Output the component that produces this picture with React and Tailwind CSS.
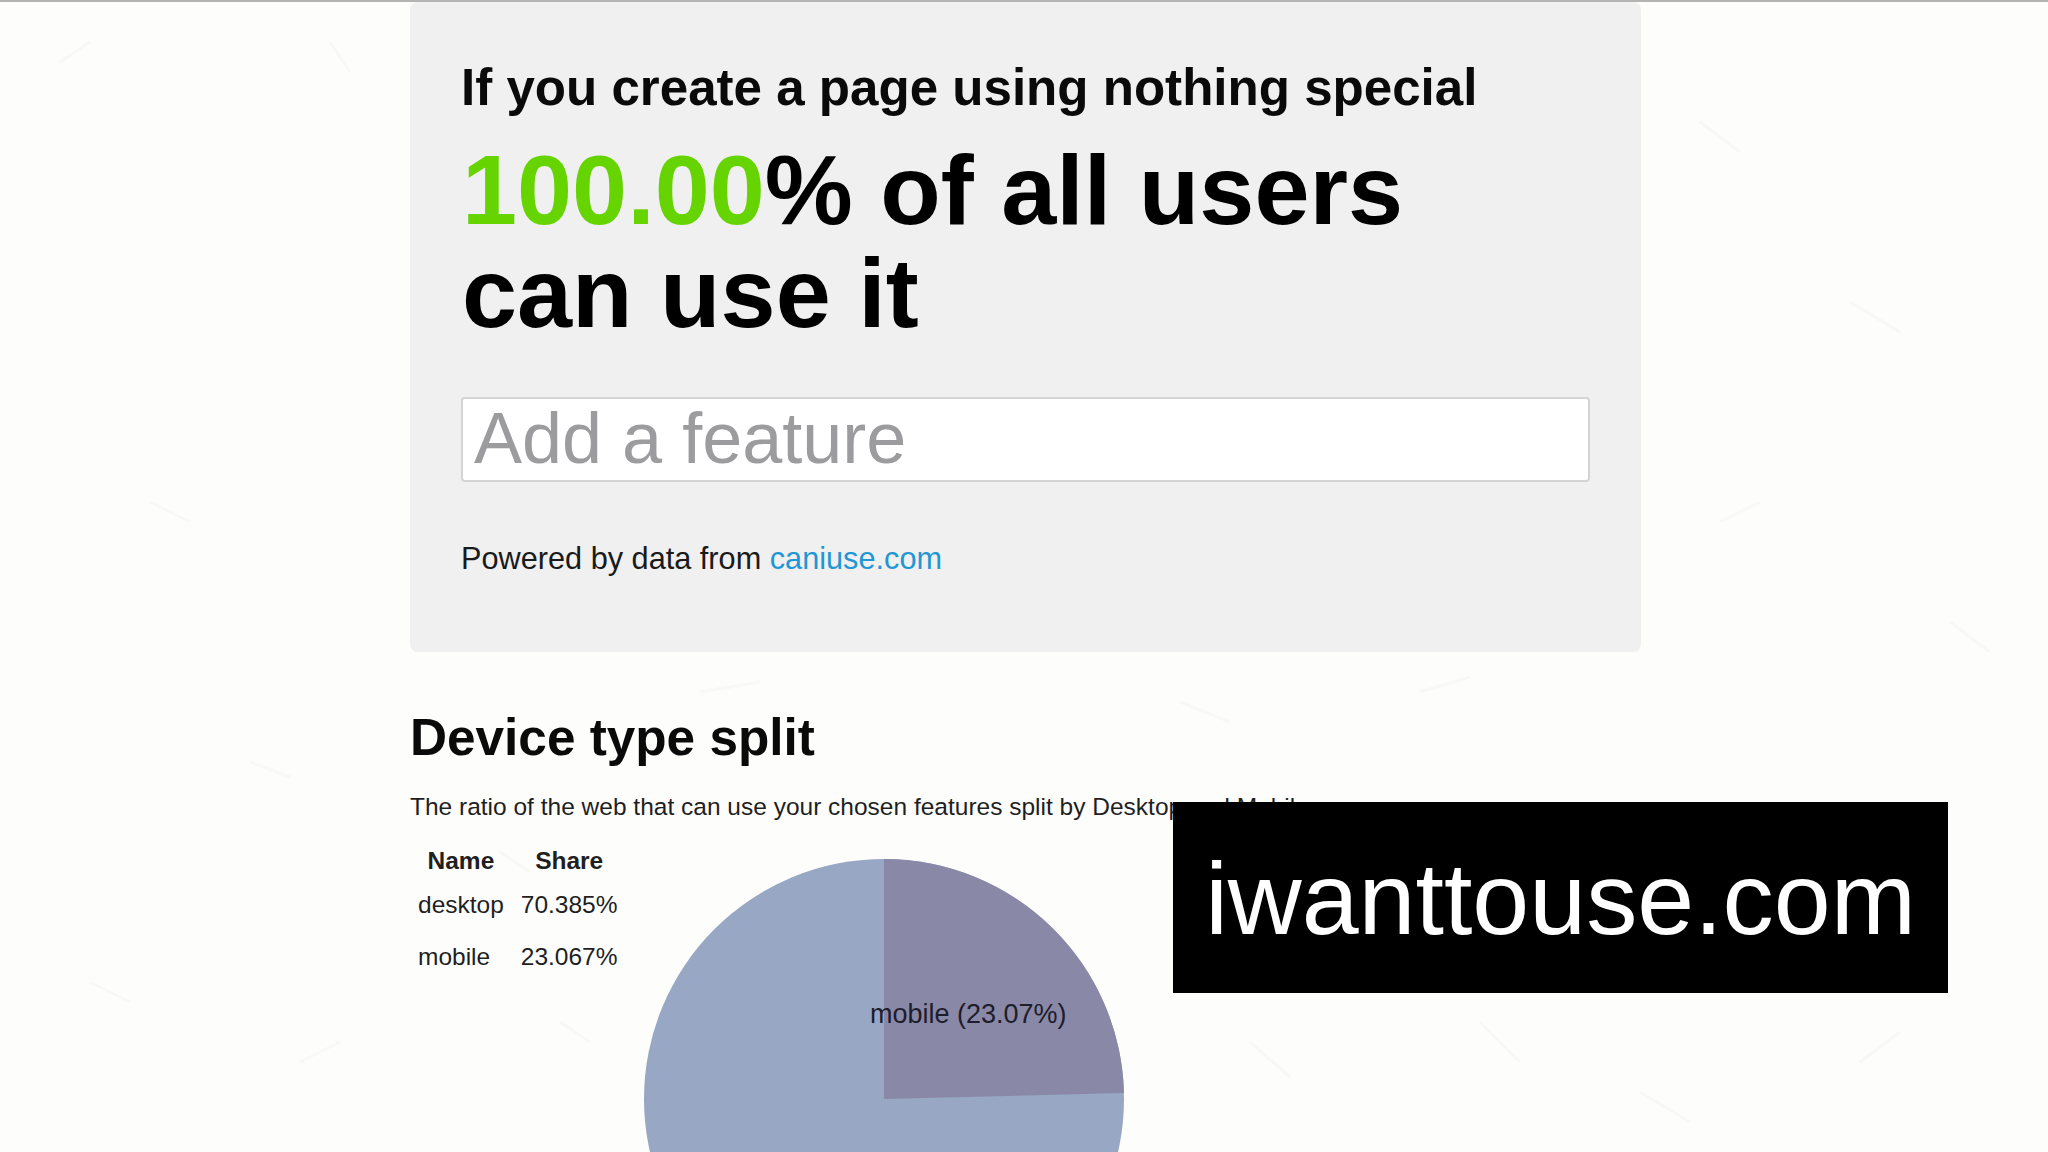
import React from 'react';

// faint paper fibres behind the page
const fibres = [
  [60, 60, 90, 40], [330, 40, 350, 70], [150, 500, 190, 520], [250, 760, 290, 775], [90, 980, 130, 1000],
  [300, 1060, 340, 1040], [1700, 120, 1740, 150], [1850, 300, 1900, 330], [1720, 520, 1760, 500], [1950, 620, 1990, 650],
  [1250, 1040, 1290, 1075], [1480, 1020, 1520, 1060], [1640, 1090, 1690, 1120], [1860, 1060, 1900, 1030], [700, 690, 760, 680],
  [1180, 700, 1230, 720], [1420, 690, 1470, 675], [560, 1020, 590, 1040], [500, 850, 530, 870], [1780, 880, 1760, 840],
];

function Pie() {
  return (
    <svg width="480" height="480" viewBox="0 0 480 480" className="block shrink-0 mt-[18px]">
      <circle cx="240" cy="240" r="240" fill="#98a8c4" />
      <path d="M240 240 L240 0 A240 240 0 0 1 480 234 Z" fill="#8a88a7" />
      <text x="226" y="164" fontSize="27" fill="#1d1d2b">mobile (23.07%)</text>
    </svg>
  );
}

export default function App() {
  return (
    <div className="relative h-screen overflow-hidden bg-[#fdfdfc] border-t-2 border-[#b4b4b4] font-['Liberation_Sans',Arial,sans-serif] text-black">
      <svg className="absolute inset-0 pointer-events-none" width="2048" height="1152">
        {fibres.map((f, i) => (
          <line key={i} x1={f[0]} y1={f[1]} x2={f[2]} y2={f[3]} stroke="#f8f8f5" strokeWidth="3" />
        ))}
      </svg>

      <main className="relative w-[1231px] ml-[410px]">
        <section className="bg-[#f0f0f1] rounded-lg px-[51px] pt-[54px] h-[650px]">
          <h2 className="text-[51.1px] leading-[64px] font-bold text-[#0a0a0a]">If you create a page using nothing special</h2>
          <h1 className="mt-[18px] ml-[1px] text-[99px] leading-[103px] font-bold">
            <span className="text-[#66d400]">100.00</span>% of all users<br />can use it
          </h1>
          <input
            placeholder="Add a feature"
            readOnly
            className="mt-[53px] block w-full h-[85px] px-[11px] pb-[3px] bg-white border-2 border-[#d4d4d6] rounded-[4px] text-[72px] placeholder:text-[#9c9c9f] outline-none"
          />
          <p className="mt-[57px] text-[30.7px] leading-[40px] text-[#1a1a1a]">
            Powered by data from <a className="text-[#1f97d4]">caniuse.com</a>
          </p>
        </section>

        <h2 className="mt-[54px] text-[51.3px] leading-[64px] font-bold text-[#0a0a0a]">Device type split</h2>
        <p className="mt-[21px] text-[24.5px] leading-[32px] text-[#1f1f1f] whitespace-nowrap">
          The ratio of the web that can use your chosen features split by Desktop and Mobile
        </p>

        <div className="flex items-start mt-[18px]">
          <div className="w-[234px] shrink-0">
            <table className="text-[24.5px] text-[#1f1f1f] border-separate border-spacing-0">
              <thead>
                <tr className="h-[40px] font-bold">
                  <th className="pl-[8px] text-center">Name</th>
                  <th className="pl-[17px] text-center">Share</th>
                </tr>
              </thead>
              <tbody>
                <tr className="h-[49px]">
                  <td className="pl-[8px]">desktop</td>
                  <td className="pl-[17px]">70.385%</td>
                </tr>
                <tr className="h-[54px]">
                  <td className="pl-[8px]">mobile</td>
                  <td className="pl-[17px]">23.067%</td>
                </tr>
              </tbody>
            </table>
          </div>
          <Pie />
        </div>
      </main>

      <div className="absolute left-[1173px] top-[800px] w-[775px] h-[191px] pt-[3px] bg-black text-white text-[102.3px] flex items-center justify-center">
        iwanttouse.com
      </div>
    </div>
  );
}
